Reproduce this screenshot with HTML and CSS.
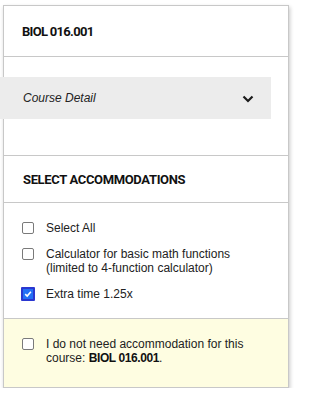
FILE: index.html
```html
<!DOCTYPE html>
<html lang="en">
<head>
<meta charset="utf-8">
<link rel="stylesheet" href="styles.css">
</head>
<body>
<div class="card">
  <div class="head">BIOL 016.001</div>
  <div class="course">
    <div class="detail">
      <span class="detail-label">Course Detail</span>
      <svg class="chev" width="12" height="8" viewBox="0 0 12 8"><path d="M1.5 1.5 L6 6 L10.5 1.5" fill="none" stroke="#1b1b1b" stroke-width="2.2"/></svg>
    </div>
  </div>
  <div class="section-title">SELECT ACCOMMODATIONS</div>
  <div class="list">
    <div class="item"><span class="box"></span><span class="text">Select All</span></div>
    <div class="item"><span class="box"></span><span class="text">Calculator for basic math functions<br>(limited to 4-function calculator)</span></div>
    <div class="item"><span class="box checked"><svg width="10" height="10" viewBox="0 0 10 10"><path d="M2.2 5.2 L4.2 7.1 L7.9 2.8" fill="none" stroke="#fff" stroke-width="1.6"/></svg></span><span class="text">Extra time 1.25x</span></div>
  </div>
  <div class="optout">
    <div class="item"><span class="box"></span><span class="text">I do not need accommodation for this<br>course: <b>BIOL 016.001</b>.</span></div>
  </div>
</div>
</body>
</html>
```
FILE: styles.css
```css
html, body {
  margin: 0;
  padding: 0;
  background: #fff;
}
body {
  font-family: "Liberation Sans", Arial, sans-serif;
  color: #1c1c1c;
}
.card {
  margin: 5px 0 0 3px;
  width: 284px;
  border: 1px solid #c8c8c8;
  box-shadow: 1px 2px 4px rgba(0,0,0,0.22);
  background: #fff;
}
.head {
  height: 50px;
  display: flex;
  align-items: center;
  padding-left: 18px;
  font-family: Roboto, "Liberation Sans", sans-serif;
  font-weight: 700;
  font-size: 13px;
  letter-spacing: -0.7px;
  color: #111;
  border-bottom: 1px solid #c8c8c8;
}
.course {
  padding: 20px 0 36px;
  border-bottom: 1px solid #c8c8c8;
}
.detail {
  margin-left: -4px;
  width: 271px;
  height: 42px;
  background: #ececec;
  display: flex;
  align-items: center;
  justify-content: space-between;
  padding: 0 17px 0 23px;
  box-sizing: border-box;
}
.detail-label {
  font-style: italic;
  font-size: 12px;
  color: #222;
}
.chev {
  display: block;
  margin-top: 1px;
}
.section-title {
  height: 46px;
  display: flex;
  align-items: center;
  padding-left: 19px;
  font-family: Roboto, "Liberation Sans", sans-serif;
  font-weight: 700;
  font-size: 13px;
  letter-spacing: -0.35px;
  color: #111;
  border-bottom: 1px solid #c8c8c8;
}
.list {
  padding: 18px 0 17px 18px;
  display: flex;
  flex-direction: column;
  gap: 12px;
}
.item {
  display: flex;
  align-items: flex-start;
  gap: 12px;
  font-size: 12px;
  line-height: 14px;
  color: #222;
}
.box {
  flex: none;
  width: 12px;
  height: 12px;
  box-sizing: border-box;
  border: 1px solid #7a7a7a;
  border-radius: 2px;
  background: #fff;
  margin-top: 1px;
  display: flex;
  align-items: center;
  justify-content: center;
}
.box.checked {
  width: 14px;
  height: 14px;
  margin: 0 -1px 0 -1px;
  border: 2px solid #2a37d0;
  border-radius: 1px;
  background: #2370f5;
}
.optout {
  border-top: 1px solid #c8c8c8;
  background: #fefde1;
  padding: 18px 0 22px 18px;
}
.optout b {
  font-weight: 700;
  color: #111;
  letter-spacing: -0.4px;
}
```
